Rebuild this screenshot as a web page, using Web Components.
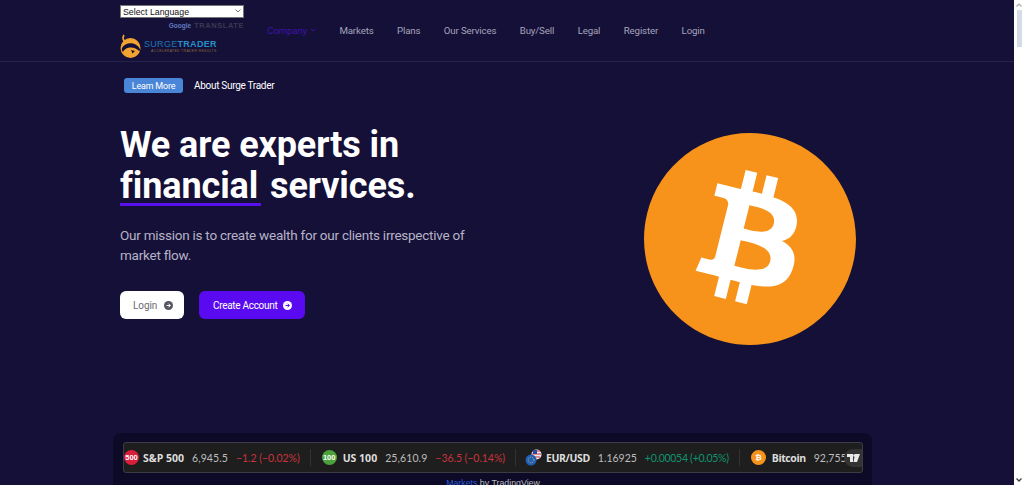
<!DOCTYPE html>
<html><head><meta charset="utf-8"><style>
html,body{margin:0;height:485px;overflow:hidden;background:#151038}
body{font-family:Roboto,"Liberation Sans",sans-serif}
</style></head><body>
<st-page>
<st-nav></st-nav>
<st-hero></st-hero>
<st-ticker></st-ticker>
</st-page>
<script>
function def(name,html){customElements.define(name,class extends HTMLElement{constructor(){super();this.attachShadow({mode:'open'}).innerHTML=html}})}
def('st-page',`<style>:host{display:grid;grid-template-columns:1fr 10px;width:1024px;height:485px;overflow:hidden;background:#151038;color:#fff}
.main{display:flex;flex-direction:column;min-width:0;height:485px;overflow:hidden}
.bar{background:#fff;display:flex;flex-direction:column;align-items:center}
.bar svg{display:block;flex:none}
.thumb{width:5px;height:37px;background:#d5dce6}
.sp{flex:1}
</style><div class="main"><slot></slot></div><div class="bar"><svg width="10" height="10" viewBox="0 0 10 10"><path d="M2.500 6.500 5 4l2.500 2.500" fill="none" stroke="#aaa" stroke-width="1.200"/></svg><div class="thumb"></div><div class="sp"></div><svg width="10" height="10" viewBox="0 0 10 10"><path d="M2.500 3.500 5 6l2.500-2.500" fill="none" stroke="#444" stroke-width="1.300"/></svg></div>`);
def('st-nav',`<style>:host{display:flex;height:62px;box-sizing:border-box;border-bottom:1px solid #272152;padding-left:120px;font:400 9.7px Roboto,"Liberation Sans",sans-serif;letter-spacing:-.15px;color:#a5a3bb}
.brand{width:147px;display:flex;flex-direction:column;padding-top:5px;flex:none;letter-spacing:0}
.sel{position:relative;width:124px;height:13px}
select{appearance:none;width:124px;height:13px;font:8.8px "Liberation Sans",sans-serif;background:#fff;color:#111;border:1px solid #767676;padding:0 0 0 2px;margin:0;box-sizing:border-box;border-radius:0;display:block}
.sel svg{position:absolute;right:3px;top:4px}
.gt{display:flex;width:124px;justify-content:flex-end;gap:3px;height:15px;align-items:center;font:600 7.5px "Liberation Sans",sans-serif;letter-spacing:.55px;color:#3b3850}
.g{font-size:6.5px;letter-spacing:0;color:#5f7ac0}
.logo{display:flex;gap:3px;align-items:center;height:25px}
.lt{display:flex;flex-direction:column;line-height:1}
.lt b{font:700 9px "Liberation Sans",sans-serif;letter-spacing:.3px;color:#2590c7;display:block;white-space:nowrap}
.lt b span{font-weight:400;color:#1f77b0}
.lt i{font:normal 3.5px "Liberation Sans",sans-serif;color:#8a6a40;letter-spacing:.3px;padding-left:7px}
ul{display:flex;list-style:none;margin:0;padding:0;gap:23.5px;height:60px;align-items:center;white-space:nowrap}
.a{color:#3d12a8;display:flex;gap:3px;align-items:center}
</style>
<div class="brand"><div class="sel"><select><option>Select Language</option></select><svg width="6" height="4" viewBox="0 0 6 4"><path d="M.5.500 3 3 5.500.500" fill="none" stroke="#777"/></svg></div>
<div class="gt"><span class="g">Google</span><span>TRANSLATE</span></div>
<div class="logo"><svg width="21" height="25" viewBox="0 0 21 25"><circle cx="10.500" cy="15" r="10" fill="#f2a430"/><path d="M4 2C2 5 3 8.500 7 8.500" fill="none" stroke="#f2a430" stroke-width="1.700"/><path d="M2 15C4 11 9 9.500 13 10.500c3 .8 5.500 2.500 7 5.500l-.5 2.500C17 15.500 13 14 9.500 14.500 6.500 15 4 16.500 3 19c-1-1-1.500-2.500-1-4zM11 17l4 1-2.500 2.500z" fill="#151038"/></svg><div class="lt"><b><span>SURGE</span>TRADER</b><i>ACCELERATED TRADER RESULTS</i></div></div></div>
<ul><li class="a">Company <svg width="6" height="4" viewBox="0 0 6 4"><path d="M.8.800 3 3 5.200.800" fill="none" stroke="#3d12a8"/></svg></li><li>Markets</li><li>Plans</li><li>Our Services</li><li>Buy/Sell</li><li>Legal</li><li>Register</li><li>Login</li></ul>`);
def('st-hero',`<style>:host{display:flex;height:371px;padding-left:120px;box-sizing:border-box}
.l{width:480px;display:flex;flex-direction:column;align-items:flex-start}
.crumb{display:flex;align-items:center;gap:11px;margin:16px 0 0 4px;font:400 10px Roboto,"Liberation Sans",sans-serif;letter-spacing:-.3px;color:#fff;height:15px}
.tag{background:#4a86d8;border-radius:3px;height:15px;width:59px;justify-content:center;display:flex;align-items:center;font-size:9px;letter-spacing:-.2px}
h1{margin:32px 0 0;font:700 36px/41px Roboto,"Liberation Sans",sans-serif;color:#fff;letter-spacing:-.1px;font-variant-ligatures:none}
u{text-decoration:none;display:inline-block;border-bottom:3px solid #5a10ec;line-height:34px;padding-right:3px}
p{margin:18px 0 0;width:360px;font:400 13.5px/20px Roboto,"Liberation Sans",sans-serif;letter-spacing:-.25px;color:#b5b3c6}
.btns{display:flex;gap:15px;margin-top:26px}
.b{height:28px;border-radius:6px;display:flex;align-items:center;font:400 10px Roboto,"Liberation Sans",sans-serif;box-sizing:border-box}
.w{background:#fff;color:#6b6b75;width:64px;padding-left:13px;gap:7px;letter-spacing:-.1px}
.v{background:#5a0af0;color:#fff;width:106px;padding-left:14px;gap:6px;letter-spacing:-.3px}
.r{flex:1;display:flex;padding:71px 0 0 44px}
</style>
<div class="l"><div class="crumb"><span class="tag">Learn More</span><span>About Surge Trader</span></div>
<h1>We are experts in<br><u>financial</u> services.</h1>
<p>Our mission is to create wealth for our clients irrespective of market flow.</p>
<div class="btns"><div class="b w">Login <svg width="9" height="9" viewBox="0 0 9 9"><circle cx="4.500" cy="4.500" r="4.500" fill="#55555f"/><path d="M2.500 4.500h3.800M4.500 2.700l1.800 1.800-1.800 1.800" fill="none" stroke="#fff"/></svg></div><div class="b v">Create Account <svg width="9" height="9" viewBox="0 0 9 9"><circle cx="4.500" cy="4.500" r="4.500" fill="#fff"/><path d="M2.500 4.500h3.800M4.500 2.700l1.800 1.800-1.800 1.800" fill="none" stroke="#5a0af0"/></svg></div></div></div>
<div class="r"><svg width="212" height="212" viewBox="0 0 4091.27 4091.73" style="display:block"><path fill="#f7931a" d="M4030.06 2540.77c-273.24,1096.01 -1383.32,1763.02 -2479.46,1489.71 -1095.68,-273.24 -1762.69,-1383.39 -1489.33,-2479.31 273.12,-1096.13 1383.2,-1763.19 2479,-1489.95 1096.06,273.24 1763.03,1383.51 1489.76,2479.57l0.03 -0.02z"/><path fill="#fff" d="M2947.77 1754.38c40.72,-272.26 -166.56,-418.61 -450,-516.24l91.95 -368.8 -224.5 -55.94 -89.51 359.09c-59.02,-14.72 -119.63,-28.59 -179.87,-42.34l90.16 -361.46 -224.36 -55.94 -92 368.68c-48.84,-11.12 -96.81,-22.11 -143.35,-33.69l0.26 -1.16 -309.59 -77.31 -59.72 239.78c0,0 166.56,38.18 163.05,40.53 90.91,22.69 107.35,82.87 104.62,130.57l-104.74 420.15c6.26,1.59 14.38,3.89 23.34,7.49 -7.49,-1.86 -15.46,-3.89 -23.73,-5.87l-146.81 588.57c-11.11,27.62 -39.31,69.07 -102.87,53.33 2.25,3.26 -163.17,-40.72 -163.17,-40.72l-111.46 256.98 292.15 72.83c54.35,13.63 107.61,27.89 160.06,41.3l-92.9 373.03 224.24 55.94 92 -369.07c61.26,16.63 120.71,31.97 178.91,46.43l-91.69 367.33 224.51 55.94 92.89 -372.33c382.82,72.45 670.67,43.24 791.83,-303.02 97.63,-278.78 -4.86,-439.58 -206.26,-544.44 146.69,-33.83 257.18,-130.31 286.64,-329.61l-0.07 -0.05zm-512.93 719.26c-69.38,278.78 -538.76,128.08 -690.94,90.29l123.28 -494.2c152.17,37.99 640.17,113.17 567.66,403.91zm69.43 -723.3c-63.29,253.58 -453.96,124.75 -580.69,93.16l111.77 -448.21c126.73,31.59 534.85,90.55 468.92,355.05z"/></svg></div>`);
def('st-ticker',`<style>:host{display:block;height:52px;margin-left:113px;width:759px;background:#0d0a28;border-radius:8px 8px 0 0;box-sizing:border-box;padding:9px 9px 0 10px;font:700 10.5px "Open Sans","Liberation Sans",sans-serif;color:#ddd;white-space:nowrap}
.t{height:31px;box-sizing:border-box;background:#1e1e1e;border:1px solid #3c3c44;border-radius:3px;display:flex;align-items:center;overflow:hidden;position:relative}
.i{display:flex;align-items:center;flex:none}
.c{width:15px;height:15px;border-radius:50%;color:#fff;font:700 7.5px/15px "Liberation Sans",sans-serif;text-align:center;margin-right:4px;flex:none}
.c.m{margin-right:6px}
.n{font:400 10.5px Lato,sans-serif;color:#bdbdbd;margin-left:8px;letter-spacing:.1px}
.d{font:400 10.5px Lato,sans-serif;margin-left:8px;letter-spacing:-.05px}
.tight{letter-spacing:-.4px}
.tight .n{letter-spacing:0}
.tight .d{letter-spacing:-.28px}
.s{width:1px;height:17px;background:#333;margin:0 10.5px;flex:none}
.s.k{margin:0 9px 0 10px}
.tv{position:absolute;right:0;top:6px;width:18px;height:18px;border-radius:9px 0 0 9px;background:#333}
.tv svg{display:block;margin:5px 0 0 3px}
.cap{text-align:center;margin-top:5px;font:400 8.8px "Liberation Sans",sans-serif;color:#bbb}
.cap span{color:#2a5bd7}
</style><div class="t">
<div class="i"><span class="c" style="background:#d81e3a">500</span>S&amp;P 500<span class="n">6,945.5</span><span class="d" style="color:#c9343d">−1.2 (−0.02%)</span></div><div class="s"></div>
<div class="i"><span class="c m" style="background:#4ca23a">100</span>US 100<span class="n">25,610.9</span><span class="d" style="color:#c9343d">−36.5 (−0.14%)</span></div><div class="s k"></div>
<div class="i tight"><svg width="17" height="17" viewBox="0 0 17 17" style="margin-right:4px;flex:none"><circle cx="11.500" cy="5.500" r="5" fill="#e9eaf0"/><path d="M8 2h7M7 5h9M8 8h7" stroke="#d82b3c" stroke-width="1.200"/><rect x="8" y="1" width="4" height="4" fill="#2a4ca0"/><circle cx="6" cy="11" r="5.500" fill="#1f5fb8"/><circle cx="6" cy="11" r="2.800" fill="none" stroke="#e8c64a" stroke-width=".8" stroke-dasharray="1 1"/></svg>EUR/USD<span class="n">1.16925</span><span class="d" style="color:#10946e">+0.00054 (+0.05%)</span></div><div class="s"></div>
<div class="i tight"><span class="c m" style="background:#f7931a;font-size:8px">₿</span>Bitcoin<span class="n">92,755</span></div>
<div class="tv"><svg width="13" height="8" viewBox="0 0 13 8"><path d="M0 0h6v8H3V3H0zM8 0h5l-3 8H6.500z" fill="#e8e8e8"/><circle cx="7.500" cy="1.500" r="1.300" fill="#e8e8e8"/></svg></div></div>
<div class="cap"><span>Markets</span> by TradingView</div>`);
</script></body></html>
